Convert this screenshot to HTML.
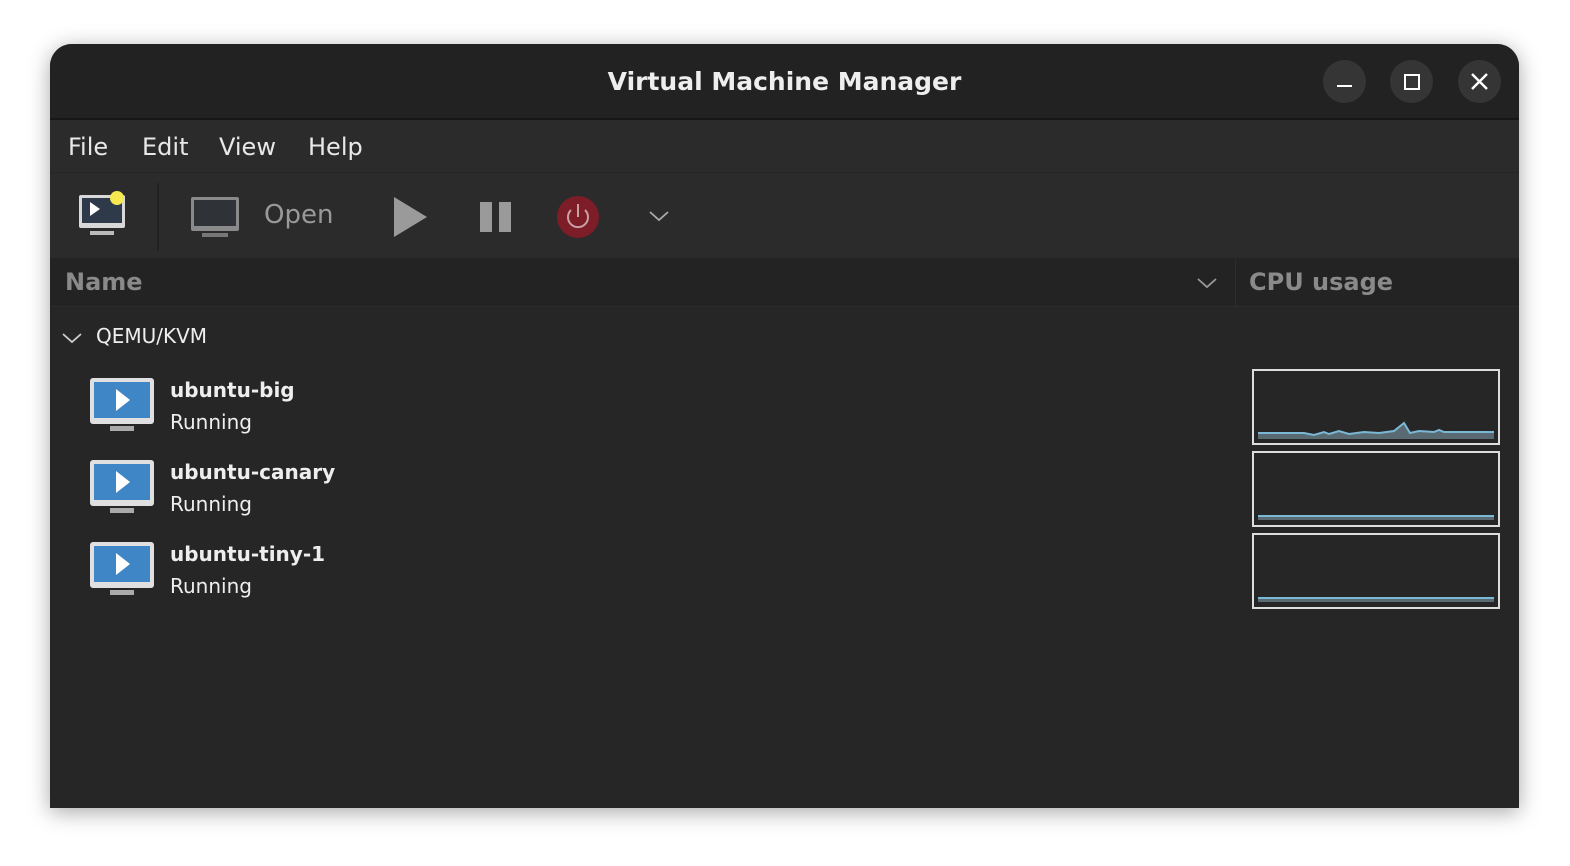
<!DOCTYPE html>
<html><head><style>
body{margin:0;width:1570px;height:866px;background:#fff;position:relative;overflow:hidden;font-family:"DejaVu Sans","Liberation Sans",sans-serif}
.win{position:absolute;left:50px;top:44px;width:1469px;height:764px;background:#262626;border-radius:22px 22px 0 0;overflow:hidden;box-shadow:0 4px 22px rgba(0,0,0,.35)}
.title{position:absolute;left:0;top:0;width:100%;height:74px;background:#222;border-bottom:2px solid #171717;color:#eee;font-size:25px;font-weight:bold;text-align:center;line-height:76px}
.btn{position:absolute;top:16px;width:43px;height:43px;border-radius:50%;background:#353535}
.menu{position:absolute;top:76px;left:0;width:100%;height:52px;background:#2b2b2b;color:#e8e8e8;font-size:24px}
.menu span{position:absolute;top:13px}
.tool{position:absolute;top:128px;left:0;width:100%;height:86px;background:#2b2b2b;border-top:1px solid #262626}
.hdr{position:absolute;top:214px;left:0;width:100%;height:48px;background:#232323;border-bottom:1px solid #2c2c2c;color:#8a8a8a;font-weight:bold;font-size:24px}
.t{position:absolute;color:#eee}
.graph{position:absolute;left:1202px;width:244px;height:72px;border:2px solid #ddd;background:#262626}
</style></head><body>
<div class="win">
<div class="title">Virtual Machine Manager
<div class="btn" style="left:1273px"><div style="position:absolute;left:14px;top:25px;width:15px;height:2px;background:#fff"></div></div>
<div class="btn" style="left:1340px"><div style="position:absolute;left:14px;top:14px;width:12px;height:12px;border:2px solid #fff"></div></div>
<div class="btn" style="left:1408px"><svg width="43" height="43" style="position:absolute;left:0;top:0"><path d="M14 14L29 29M29 14L14 29" stroke="#fff" stroke-width="2.4"/></svg></div>
</div>
<div class="menu"><span style="left:18px">File</span><span style="left:92px">Edit</span><span style="left:169px">View</span><span style="left:258px">Help</span></div>
<div class="tool">
<svg width="700" height="86" style="position:absolute;left:0;top:0">
<rect x="29" y="22" width="46" height="33" rx="2" fill="#d8d8d8"/><rect x="32" y="25" width="40" height="25" fill="#2e3a4a"/><path d="M40 29l10 7-10 7z" fill="#fff"/><rect x="40" y="58" width="24" height="4" fill="#bbb"/><circle cx="67" cy="25" r="7" fill="#f5e850"/>
<line x1="108" y1="10" x2="108" y2="78" stroke="#222" stroke-width="2"/>
<rect x="141" y="24" width="48" height="34" rx="2" fill="#8a8a8a"/><rect x="144" y="27" width="42" height="26" fill="#2f3338"/><rect x="152" y="60" width="26" height="4" fill="#777"/>
<path d="M344 24l33 20-33 20z" fill="#9a9a9a"/>
<rect x="430" y="29" width="12" height="30" fill="#9a9a9a"/><rect x="449" y="29" width="12" height="30" fill="#9a9a9a"/>
<circle cx="528" cy="44" r="21" fill="#7c1d27"/><path d="M521 37a10 10 0 1 0 14 0M528 31v13" stroke="#c9a0a4" stroke-width="2" fill="none"/>
<path d="M600 39l9 8 9-8" stroke="#aaa" stroke-width="1.8" fill="none"/>
</svg>
<div style="position:absolute;left:214px;top:27px;color:#999;font-size:26px">Open</div>
</div>
<div class="hdr"><span style="position:absolute;left:15px;top:10px">Name</span>
<svg width="30" height="30" style="position:absolute;left:1142px;top:10px"><path d="M6 11l9 8 9-8" stroke="#999" stroke-width="1.8" fill="none"/></svg>
<div style="position:absolute;left:1185px;top:0;width:1px;height:48px;background:#2d2d2d"></div>
<span style="position:absolute;left:1199px;top:10px">CPU usage</span></div>
<svg width="30" height="30" style="position:absolute;left:8px;top:280px"><path d="M5 10l9 8 9-8" stroke="#ccc" stroke-width="1.8" fill="none"/></svg>
<div class="t" style="left:46px;top:280px;font-size:20px">QEMU/KVM</div>

<svg width="70" height="260" style="position:absolute;left:38px;top:332px">
<g id="m"><rect x="2" y="2" width="64" height="46" rx="3" fill="#e0e0e0"/><rect x="6" y="6" width="56" height="36" fill="#3f86c6"/><path d="M28 13l14 11-14 11z" fill="#fff"/><rect x="22" y="50" width="24" height="5" fill="#aaa"/></g>
<use href="#m" y="82"/><use href="#m" y="164"/>
</svg>
<div class="t" style="left:120px;top:334px;font-size:20px;font-weight:bold">ubuntu-big</div>
<div class="t" style="left:120px;top:366px;font-size:20px">Running</div>
<div class="t" style="left:120px;top:416px;font-size:20px;font-weight:bold">ubuntu-canary</div>
<div class="t" style="left:120px;top:448px;font-size:20px">Running</div>
<div class="t" style="left:120px;top:498px;font-size:20px;font-weight:bold">ubuntu-tiny-1</div>
<div class="t" style="left:120px;top:530px;font-size:20px">Running</div>

<div class="graph" style="top:325px"><svg width="244" height="72"><path d="M4 62H50L60 64L70 61L75 63L85 60L95 63L110 61L125 62L140 60L150 52L156 62L165 60L180 61L185 59L190 61H240V68H4Z" fill="#5a6a72"/><path d="M4 62H50L60 64L70 61L75 63L85 60L95 63L110 61L125 62L140 60L150 52L156 62L165 60L180 61L185 59L190 61H240" stroke="#7ab8d6" stroke-width="2" fill="none"/></svg></div>
<div class="graph" style="top:407px"><svg width="244" height="72"><rect x="4" y="63" width="236" height="4" fill="#5a6a72"/><line x1="4" y1="63" x2="240" y2="63" stroke="#7ab8d6" stroke-width="2"/></svg></div>
<div class="graph" style="top:489px"><svg width="244" height="72"><rect x="4" y="63" width="236" height="4" fill="#5a6a72"/><line x1="4" y1="63" x2="240" y2="63" stroke="#7ab8d6" stroke-width="2"/></svg></div>
</div>
</body></html>
